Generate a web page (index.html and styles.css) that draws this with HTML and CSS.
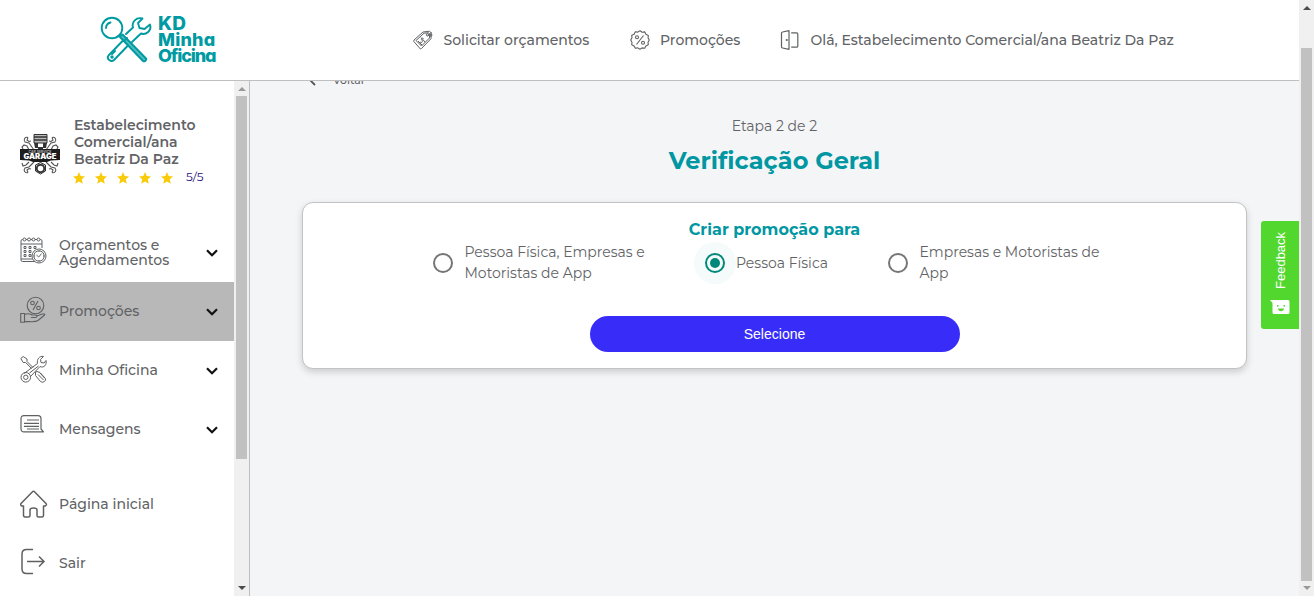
FILE: index.html
```html
<!DOCTYPE html>
<html lang="pt-BR">
<head>
<meta charset="utf-8">
<title>KD Minha Oficina</title>
<link rel="stylesheet" href="styles.css">
</head>
<body>
<div class="app">
  <div class="window">
    <header class="header">
      <a class="brand">
        <svg class="brand-mark" viewBox="0 0 54 48" fill="none" stroke="#009aa2" stroke-width="1.9" stroke-linecap="round" stroke-linejoin="round">
          <circle cx="12" cy="12" r="10.3"/>
          <path d="M6 12a6 6 0 0 1 4.500-5.500"/>
          <path d="M19.500 20.500l3-2L46 42.500c1.200 1.300-1.500 3.700-3 2.500L19.500 20.500z" fill="#55bcc1"/>
          <path d="M26 18l7-6.500C31.500 6 36 .8 42.500 2.500L38 7l1.500 5 5 1L50 8.500c2 6-4 11-9 9L32 26M28 29.500L14 44c-3 2.500-8-1-5.500-4.500L23 24.500"/>
          <path d="M27 22l-3 3M12 38l3-3"/><circle cx="12" cy="41" r=".8"/>
        </svg>
        <span class="brand-name"><span class="brand-kd">KD</span><span class="brand-minha">Minha</span><span class="brand-oficina">Oficina</span></span>
      </a>
      <nav class="nav">
        <a class="nav-item">
          <svg class="nav-icon" viewBox="0 0 20 20" fill="none" stroke="#5f6062" stroke-width="1" stroke-linejoin="round">
            <path d="M1 10L10 2l6.500-.8 1.500 1.500v6L8.500 18.500l-1 .5L.8 11.500z"/><path d="M3 10.500l8-7.300 4.500-.5 1.200 1.300-.2 4L8.500 16z"/>
            <circle cx="14.500" cy="4.800" r="1.200"/><path d="M14.500 5h5M18 2v5M8 7.500l4 4.500M10.500 8.500c-1.500-1-3 .5-1.500 1.800s-.5 3-2 1.700M5 11l4 4"/>
          </svg>
          <span>Solicitar orçamentos</span>
        </a>
        <a class="nav-item nav-promo">
          <svg class="nav-icon" viewBox="0 0 20 20" fill="none" stroke="#5f6062" stroke-width="1.100" stroke-linejoin="round">
            <path d="M10 .8l2.200 1.400 2.600-.3 1.100 2.400 2.400 1.100-.2 2.500L19.300 10l-1.300 2.200.3 2.500-2.400 1.200-1.200 2.300-2.600-.3L10 19.300l-2.200-1.400-2.500.3-1.200-2.300-2.400-1.200.3-2.500L.7 10 2 7.800l-.3-2.500 2.400-1.100 1.200-2.400 2.500.3z"/>
            <circle cx="7" cy="7.300" r="1.500"/><circle cx="13" cy="12.700" r="1.500"/><path d="M13.500 5.500l-7 9"/>
          </svg>
          <span>Promoções</span>
        </a>
        <a class="nav-item nav-user">
          <svg class="nav-icon" viewBox="0 0 20 20" fill="none" stroke="#5f6062" stroke-width="1.200" stroke-linejoin="round">
            <path d="M2.500 2L9 .7v18.600L2.500 18q-1-.2-1-1V3q0-.9 1-1zM11.200 2.800h5.300q1.300 0 1.300 1.300v11.800q0 1.300-1.300 1.300h-5.300"/><circle cx="6.800" cy="10" r=".5"/>
          </svg>
          <span>Olá, Estabelecimento Comercial/ana Beatriz Da Paz</span>
        </a>
      </nav>
    </header>

    <div class="body">
      <aside class="sidebar">
        <div class="profile">
          <svg class="avatar" viewBox="0 0 40 42">
            <g fill="none" stroke="#555" stroke-width="1.100">
              <path d="M8 3.500C5 2.500 3 5.500 5 8l4 1 5 7M8 3.500L7 6l2 1.500 2-.5M3 15l-1-2 2-2 3 1 2 4M32 3.500c3-1 5 2 3 4.500l-4 1-5 7M32 3.500L33 6l-2 1.500-2-.5M37 15l1-2-2-2-3 1-2 4"/>
              <path d="M8 38.500c-3 1-5-2-3-4.500l4-1 5-5M8 38.500L7 36l2-1.500 2 .5M32 38.500c3 1 5-2 3-4.500l-4-1-5-5M32 38.500l1-2.500-2-1.500-2 .5M2 29l1 3 3-1 3-3M38 29l-1 3-3-1-3-3"/>
            </g>
            <path d="M14 .5h13V9H14z" fill="#bbb" stroke="#333"/><path d="M14 3h13M14 6h13" stroke="#333" stroke-width="1.300"/><path d="M14 9h4v4h5V9h4l-1 5h-3v3h-5v-3h-3z" fill="#333"/>
            <path d="M15.500 31l5-2.500 5 2.500v6l-5 3-5-3z" fill="#ccc" stroke="#333"/><circle cx="20.500" cy="34.500" r="3.700" fill="#fff" stroke="#333" stroke-width="1.800"/>
            <path d="M0 15h40v11l-9 .5-4 1.500H13l-4-1.500-9-.5z" fill="#1d1d1d"/>
            <text class="avatar-small" x="20" y="18.800" text-anchor="middle" textLength="23">CAR SERVICE</text>
            <text class="avatar-text" x="20" y="25" text-anchor="middle" textLength="33" lengthAdjust="spacingAndGlyphs">GARAGE</text>
          </svg>
          <div class="profile-info">
            <div class="profile-name">Estabelecimento<br>Comercial/ana<br>Beatriz Da Paz</div>
            <div class="rating">
              <svg class="star" viewBox="0 0 12 12"><path d="M6 0l1.700 4 4.300.4-3.200 2.900.9 4.400L6 9.400l-3.700 2.300.9-4.400L0 4.400 4.300 4z"/></svg>
              <svg class="star" viewBox="0 0 12 12"><path d="M6 0l1.700 4 4.300.4-3.200 2.900.9 4.400L6 9.400l-3.700 2.300.9-4.400L0 4.400 4.300 4z"/></svg>
              <svg class="star" viewBox="0 0 12 12"><path d="M6 0l1.700 4 4.300.4-3.200 2.900.9 4.400L6 9.400l-3.700 2.300.9-4.400L0 4.400 4.300 4z"/></svg>
              <svg class="star" viewBox="0 0 12 12"><path d="M6 0l1.700 4 4.300.4-3.200 2.900.9 4.400L6 9.400l-3.700 2.300.9-4.400L0 4.400 4.300 4z"/></svg>
              <svg class="star" viewBox="0 0 12 12"><path d="M6 0l1.700 4 4.300.4-3.200 2.900.9 4.400L6 9.400l-3.700 2.300.9-4.400L0 4.400 4.300 4z"/></svg>
              <span class="score">5/5</span>
            </div>
          </div>
        </div>
        <div class="menu">
          <a class="menu-item">
            <svg class="menu-icon" viewBox="0 0 28 28" fill="none" stroke="#5f6062" stroke-width="1">
              <path d="M15 24.500H2.500Q1 24.500 1 23V4q0-1.500 1.500-1.500h18Q22 2.500 22 4v7M1 7h21M1 22h13"/>
              <g fill="#fff"><circle cx="4.500" cy="2.500" r="1.500"/><circle cx="9" cy="2.500" r="1.500"/><circle cx="13.500" cy="2.500" r="1.500"/><circle cx="18.500" cy="2.500" r="1.500"/></g>
              <path d="M4 9.500h2v2H4zM9 9.500h2v2H9zM14 9.500h2v2h-2zM4 13.500h2v2H4zM9 13.500h2v2H9zM4 17.500h2v2H4zM9 17.500h2v2H9z"/>
              <circle cx="19" cy="19" r="7" fill="#fff"/><circle cx="19" cy="19" r="5.200"/><path d="M16.500 18l2.200 2 3-3.500M19 13.800V15M14 19h1.200M23 19h1.200M19 23v1.200"/>
            </svg>
            <span class="menu-label">Orçamentos e<br>Agendamentos</span>
            <svg class="chevron" viewBox="0 0 12 8"><path d="M1 1.300l5 5 5-5"/></svg>
          </a>
          <a class="menu-item menu-active">
            <svg class="menu-icon" viewBox="0 0 28 28" fill="none" stroke="#5f6062" stroke-width="1.100" stroke-linejoin="round">
              <circle cx="15.500" cy="9.500" r="8.300"/><circle cx="12.500" cy="7" r="1.800"/><circle cx="18.500" cy="12" r="1.800"/><path d="M18 5l-5 9M.7 17.500h3.800v8.800H.7zM4.500 18.500c5-2 6 0 8 .5h3c2.500.5 1.500 2.500 0 2.500h-4.500M16.500 20l6-2c2-.5 3 .5 1.500 1.500L18 24.500c-3 2-7 1-13.500 1"/>
            </svg>
            <span class="menu-label">Promoções</span>
            <svg class="chevron" viewBox="0 0 12 8"><path d="M1 1.300l5 5 5-5"/></svg>
          </a>
          <a class="menu-item">
            <svg class="menu-icon" viewBox="0 0 28 28" fill="none" stroke="#5f6062" stroke-width="1" stroke-linejoin="round">
              <path d="M.8 3.500L3.200 1.500 7 4v2.500l6 6M.8 3.500l2.400 4h2.500l5.800 6M15 17.500l2-1 3 1 5 5.500q1.500 2-.5 3.500-2 1.500-4 0L15.500 20.500v-3zM18 19.500l5.500 5.500M20 18l4.500 5"/>
              <path d="M4 18.500L17.500 8.500c-1-4 2-8 6-7l-3 3 .5 3 3 .5 2-2.500c1 4-2 8-6 6L10 22"/>
              <circle cx="5.800" cy="22.300" r="4.800"/><circle cx="5.800" cy="22.300" r="2.200"/><path d="M9.500 18l9-7"/>
            </svg>
            <span class="menu-label">Minha Oficina</span>
            <svg class="chevron" viewBox="0 0 12 8"><path d="M1 1.300l5 5 5-5"/></svg>
          </a>
          <a class="menu-item">
            <svg class="menu-icon" viewBox="0 0 28 28" fill="none" stroke="#5f6062" stroke-width="1.200" stroke-linejoin="round">
              <path d="M4 1.600h14q3 0 3 3V15l2.500 2.800H4q-3 0-3-3v-10q0-3.200 3-3.200z"/><path d="M7 6h12M4 9.300h15M4 12.300h15M7 15h12"/>
            </svg>
            <span class="menu-label">Mensagens</span>
            <svg class="chevron" viewBox="0 0 12 8"><path d="M1 1.300l5 5 5-5"/></svg>
          </a>
        </div>
        <div class="menu menu-foot">
          <a class="menu-item">
            <svg class="menu-icon menu-icon-low" viewBox="0 0 28 28" fill="none" stroke="#5f6062" stroke-width="1.500" stroke-linejoin="round">
              <path d="M3.500 16v9q0 2 1.500 2h3.500q1.500 0 1.500-1.500V20q0-2 3.500-2t3.500 2v5.500q0 1.500 1.500 1.500H22q1.500 0 1.500-2v-9h1.700q2-1 .8-2.500L14.500 1.700q-1-.8-2 0L1 13.500Q0 15 1.800 16z"/>
            </svg>
            <span class="menu-label">Página inicial</span>
          </a>
          <a class="menu-item">
            <svg class="menu-icon" viewBox="0 0 28 28" fill="none" stroke="#5f6062" stroke-width="1.500">
              <path d="M13 1.500H6.500q-4.500 0-4.500 4.500v15q0 4.500 4.500 4.500H13M7 13.500h17M19 8.500l5 5-5 5"/>
            </svg>
            <span class="menu-label">Sair</span>
          </a>
        </div>
      </aside>
      <div class="scrollbar side-scroll"><i class="arrow arrow-up arrow-muted"></i><i class="side-thumb"></i><i class="arrow arrow-down"></i></div>

      <main class="main">
        <div class="back"><svg class="back-icon" viewBox="0 0 8 12"><path d="M7 1L2 6l5 5"/></svg><span>Voltar</span></div>
        <div class="step">Etapa 2 de 2</div>
        <h1 class="title">Verificação Geral</h1>
        <section class="card">
          <h2 class="card-title">Criar promoção para</h2>
          <div class="options">
            <label class="option"><i class="radio"></i><span>Pessoa Física, Empresas e<br>Motoristas de App</span></label>
            <label class="option option-checked"><span class="halo"><i class="radio radio-on"></i></span><span>Pessoa Física</span></label>
            <label class="option"><i class="radio"></i><span>Empresas e Motoristas de<br>App</span></label>
          </div>
          <button class="submit">Selecione</button>
        </section>
      </main>
    </div>
    <div class="feedback">
      <span class="feedback-label">Feedback</span>
      <svg class="feedback-icon" viewBox="0 0 20 15"><path d="M0 0h18q1.500 0 1.500 1.500v11q0 1.500-1.500 1.500H4q-1.500 0-1.500-1.500V3z" fill="#fff"/><path d="M7 5h1.500v1.500H7zM13.500 5H15v1.500h-1.500zM8 8.500h6q-.5 2.800-3 2.800t-3-2.800z" fill="#52d72f"/></svg>
    </div>
  </div>
  <div class="scrollbar page-scroll"><i class="arrow arrow-up"></i><i class="page-thumb"></i><i class="arrow arrow-down arrow-muted"></i></div>
</div>
</body>
</html>
```
FILE: styles.css
```css
* { box-sizing: border-box; }
body { margin: 0; overflow: hidden; background: #fff; color: #626366; font-family: Montserrat, Inter, "Open Sans", sans-serif; font-variant-ligatures: none; }
svg { display: block; flex: none; }
.app { display: flex; height: 596px; width: 1314px; }
.window { position: relative; display: flex; flex-direction: column; width: 1299px; }
.header { display: flex; height: 81px; flex: none; border-bottom: 1px solid #bfbfbf; background: #fff; }
.brand { display: flex; width: 413px; padding: 16px 0 0 100px; }
.brand-mark { width: 54px; height: 48px; margin-right: 4px; }
.brand-name { display: flex; flex-direction: column; color: #009aa2; font-family: Inter, sans-serif; font-size: 19px; line-height: 16px; font-weight: 800; font-feature-settings: "cv11"; white-space: nowrap; }
.brand-kd { letter-spacing: .2px; }
.brand-minha { font-size: 18px; letter-spacing: .2px; }
.brand-oficina { font-size: 18px; letter-spacing: -1.150px; }
.nav { display: flex; }
.nav-item { display: flex; align-items: center; gap: 10.500px; height: 80px; font-size: 14px; font-weight: 500; white-space: nowrap; width: 217px; }
.nav-promo { width: 150px; gap: 10px; }
.nav-user { width: 400px; }
.nav-icon { width: 20px; height: 20px; }

.body { display: flex; height: 515px; }
.sidebar { width: 234px; background: #fff; overflow: hidden; }
.profile { display: flex; padding: 36px 0 0 20px; height: 142px; }
.avatar { width: 40px; height: 42px; margin: 17px 13px 0 0; }
.avatar-small { font: 700 3.500px Inter, sans-serif; fill: #aaa; }
.avatar-text { font: 900 7px Inter, sans-serif; fill: #fff; }
.profile-name { padding-left: 1px; font-size: 14px; line-height: 17px; font-weight: 600; white-space: nowrap; }
.rating { display: flex; align-items: center; gap: 10px; height: 18px; }
.star { width: 12px; height: 12px; fill: #f9cb08; margin-top: 1px; }
.score { font-size: 12px; color: #1d0c7a; margin: -1px 0 0 3px; }
.menu-item { display: flex; align-items: center; height: 59px; padding: 0 16px 0 20px; }
.menu-active { background: #b8b8b8; }
.menu-icon { width: 28px; height: 28px; margin: -3px 11px 0 0; }
.menu-icon-low { margin-top: -1px; }
.menu-label { flex: 1; font-size: 14px; line-height: 15px; font-weight: 500; white-space: nowrap; }
.chevron { width: 12px; height: 8px; fill: none; stroke: #111; stroke-width: 2.200; }
.menu-foot { margin-top: 16px; }

.scrollbar { display: flex; flex-direction: column; align-items: center; background: #f0f0f0; width: 15px; flex: none; }
.arrow { width: 0; height: 0; border: 4px solid transparent; flex: none; }
.arrow-up { border-top: 0; border-bottom-color: #4b4b4b; margin: 6px 0 5px; }
.arrow-down { border-bottom: 0; border-top-color: #4b4b4b; margin: auto 0 6px; }
.arrow-up.arrow-muted { border-bottom-color: #999; }
.arrow-down.arrow-muted { border-top-color: #999; }
.side-thumb { width: 11px; height: 363px; background: #c1c1c1; }
.page-thumb { width: 11px; height: 533px; margin-top: 33px; background: #c1c1c1; }

.main { flex: 1; border-left: 1px solid #bfbfbf; background: #f4f5f7; overflow: hidden; padding: 0 52px; }
.back { display: flex; align-items: center; gap: 17px; height: 16px; margin-top: -9px; padding-left: 6px; font-size: 10.800px; font-weight: 500; }
.back-icon { width: 8px; height: 12px; fill: none; stroke: #555; stroke-width: 1.800; }
.step { text-align: center; font-size: 14px; line-height: 20px; margin-top: 28px; }
.title { margin: 10px 0 0; text-align: center; color: #0097a3; font-size: 24px; line-height: 30px; font-weight: 700; }
.card { display: flex; flex-direction: column; align-items: center; height: 167px; margin-top: 26px; border: 1px solid #c3c3c3; border-radius: 11px; background: #fff; box-shadow: 0 3px 7px rgba(0,0,0,.17); padding-top: 17px; }
.card-title { margin: 0; color: #0097a3; font-size: 16px; line-height: 20px; font-weight: 700; }
.options { display: grid; grid-template-columns: 262px 193px 230px; align-self: stretch; padding-left: 130px; height: 46px; }
.option { display: flex; align-items: center; font-size: 14px; line-height: 21px; font-weight: 400; white-space: nowrap; gap: 11.500px; }
.option-checked { gap: 0; margin-left: -1px; }
.radio { display: flex; align-items: center; justify-content: center; width: 20px; height: 20px; border: 2px solid #757575; border-radius: 50%; flex: none; }
.radio-on { border-color: #00897b; }
.radio-on::after { content: ""; width: 10px; height: 10px; flex: none; border-radius: 50%; background: #00897b; }
.halo { display: flex; align-items: center; justify-content: center; width: 42px; height: 42px; border-radius: 50%; background: #f5fafa; }
.submit { width: 370px; height: 36px; margin-top: 30px; border: 0; border-radius: 18px; background: #382df8; color: #fff; font: 14px "Liberation Sans", sans-serif; }

.feedback { position: absolute; right: 0; top: 220.500px; display: flex; flex-direction: column; align-items: center; width: 38px; height: 108.500px; padding-top: 11.500px; background: #52d72f; border-radius: 3px 0 0 3px; }
.feedback-label { writing-mode: vertical-rl; transform: rotate(180deg); height: 57px; margin-left: 1px; color: #fff; font: 13px/16px "Liberation Sans", sans-serif; }
.feedback-icon { width: 20px; height: 15px; margin-top: 10.500px; }
```
